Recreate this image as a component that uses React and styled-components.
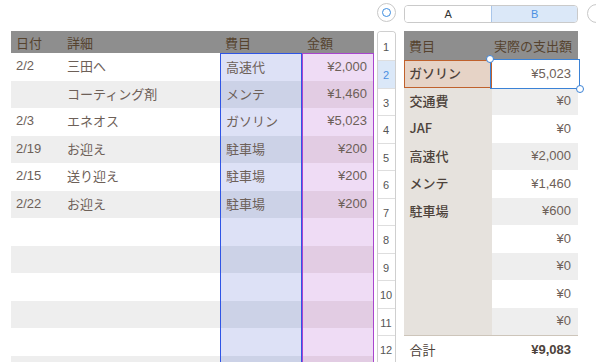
import React from "react";
import styled, { createGlobalStyle } from "styled-components";

const GlobalStyle = createGlobalStyle`
  html, body {
    margin: 0;
    padding: 0;
    background: #fff;
    overflow: hidden;
  }
  body {
    font-family: "Liberation Sans", "Noto Sans CJK JP", sans-serif;
    font-size: 13px;
    color: #6d6058;
  }
`;

const leftRows = [
  ["2/2", "三田へ", "高速代", "¥2,000"],
  ["", "コーティング剤", "メンテ", "¥1,460"],
  ["2/3", "エネオス", "ガソリン", "¥5,023"],
  ["2/19", "お迎え", "駐車場", "¥200"],
  ["2/15", "送り迎え", "駐車場", "¥200"],
  ["2/22", "お迎え", "駐車場", "¥200"],
  ["", "", "", ""],
  ["", "", "", ""],
  ["", "", "", ""],
  ["", "", "", ""],
  ["", "", "", ""],
  ["", "", "", ""],
];

const rightRows = [
  ["ガソリン", "¥5,023"],
  ["交通費", "¥0"],
  ["JAF", "¥0"],
  ["高速代", "¥2,000"],
  ["メンテ", "¥1,460"],
  ["駐車場", "¥600"],
  ["", "¥0"],
  ["", "¥0"],
  ["", "¥0"],
  ["", "¥0"],
];

const Page = styled.div`
  display: flex;
  align-items: flex-start;
  width: 596px;
  height: 362px;
  overflow: hidden;
`;

const LeftTable = styled.div`
  margin: 31px 0 0 11px;
  width: 363px;
  flex-shrink: 0;
  display: grid;
  grid-template-columns: 51px 158px 82px 72px;
`;

const HeadCell = styled.div`
  height: ${(p) => p.$h || 22}px;
  background: #8e8e8e;
  color: #56432f;
  display: flex;
  align-items: center;
  justify-content: ${(p) => (p.$right ? "flex-end" : "flex-start")};
  padding: 0 ${(p) => (p.$right ? 6 : 0)}px 0 ${(p) => (p.$right ? 0 : 5)}px;
  box-sizing: border-box;
  font-size: 13px;
`;

const toneBg = {
  plain: ["#ffffff", "#eeeeee"],
  blue: ["#dde1f6", "#ccd2e7"],
  pink: ["#efdcf5", "#e2cce3"],
};

const toneLine = {
  blue: "#2f55e6",
  pink: "#a845cf",
};

const Cell = styled.div`
  height: 27.5px;
  box-sizing: border-box;
  background: ${(p) => toneBg[p.$tone][p.$alt ? 1 : 0]};
  display: flex;
  align-items: center;
  justify-content: ${(p) => (p.$right ? "flex-end" : "flex-start")};
  padding: 0 ${(p) => (p.$right ? 6 : 0)}px 2px ${(p) => (p.$right ? 0 : 5)}px;
  white-space: nowrap;
  ${(p) =>
    p.$tone !== "plain" &&
    `border-left: 1px solid ${toneLine[p.$tone]};
     border-right: 1px solid ${toneLine[p.$tone]};`}
  ${(p) => p.$first && p.$tone !== "plain" && `border-top: 1px solid ${toneLine[p.$tone]};`}
`;

const NumColumn = styled.div`
  width: 20px;
  margin-left: 2px;
  flex-shrink: 0;
  display: flex;
  flex-direction: column;
  align-items: center;
`;

const CircleButton = styled.div`
  width: 19px;
  height: 19px;
  margin-top: 3px;
  border-radius: 50%;
  border: 1px solid #c8c8c8;
  box-sizing: border-box;
  background: #fff;
  display: flex;
  align-items: center;
  justify-content: center;
  flex-shrink: 0;
  &::after {
    content: "";
    width: 9px;
    height: 9px;
    border-radius: 50%;
    border: 1.5px solid #3d8de0;
    box-sizing: border-box;
  }
`;

const NumStrip = styled.div`
  margin-top: 9px;
  width: 17px;
  border: 1px solid #cfcfcf;
  border-bottom: none;
  border-radius: 4px 4px 0 0;
  background: #fff;
  overflow: hidden;
`;

const NumCell = styled.div`
  height: ${(p) => (p.$first ? 28 : 27.5)}px;
  box-sizing: border-box;
  border-top: ${(p) => (p.$first ? "none" : "1px solid #dedede")};
  background: ${(p) => (p.$active ? "#dbe8f8" : "#fff")};
  color: ${(p) => (p.$active ? "#4a90e2" : "#555")};
  font-size: 11px;
  display: flex;
  align-items: center;
  justify-content: center;
  padding-top: 2px;
`;

const RightArea = styled.div`
  margin-left: 8px;
  display: flex;
  flex-direction: column;
  flex-shrink: 0;
`;

const Toolbar = styled.div`
  display: flex;
  align-items: center;
  height: 31px;
  gap: 9px;
`;

const ColumnBar = styled.div`
  display: flex;
  width: 174px;
  height: 18px;
  margin-top: -4px;
  border: 1px solid #cacaca;
  border-radius: 4px;
  box-sizing: border-box;
  overflow: hidden;
`;

const ColumnTab = styled.div`
  width: ${(p) => p.$w}px;
  display: flex;
  align-items: center;
  justify-content: center;
  font-size: 11px;
  color: ${(p) => (p.$active ? "#4a90e2" : "#333")};
  background: ${(p) => (p.$active ? "#dbe8f8" : "#fff")};
  border-left: ${(p) => (p.$active ? "1px solid #a9c6ea" : "none")};
`;

const EdgeButton = styled.div`
  width: 19px;
  height: 19px;
  margin-top: -4px;
  border-radius: 50%;
  border: 1px solid #c8c8c8;
  box-sizing: border-box;
  flex-shrink: 0;
`;

const RightTable = styled.div`
  width: 174px;
  display: grid;
  grid-template-columns: 88px 86px;
`;

const KeyCell = styled.div`
  height: 27.5px;
  box-sizing: border-box;
  background: ${(p) => (p.$selected ? "#e6d3c6" : "#e6e2dd")};
  border: ${(p) => (p.$selected ? "1.5px solid #c0612c" : "none")};
  color: #4d423b;
  font-family: "Noto Sans CJK JP", "Liberation Sans", sans-serif;
  font-weight: 500;
  display: flex;
  align-items: center;
  padding: 0 0 2px ${(p) => (p.$selected ? 4 : 5.5)}px;
`;

const ValueCell = styled.div`
  height: 27.5px;
  box-sizing: border-box;
  background: ${(p) => (p.$alt ? "#eeeeee" : "#fff")};
  display: flex;
  align-items: center;
  justify-content: flex-end;
  padding: 0 7px 1px 0;
  position: relative;
`;

const Selection = styled.div`
  position: absolute;
  z-index: 2;
  left: -2px;
  top: -1px;
  right: -2px;
  bottom: -1px;
  border: 1.5px solid #3b82d6;
  pointer-events: none;
`;

const Handle = styled.span`
  position: absolute;
  width: 6px;
  height: 6px;
  border-radius: 50%;
  background: #fff;
  border: 1.5px solid #3b82d6;
  ${(p) => (p.$pos === "tl" ? "left: -5px; top: -5px;" : "right: -5px; bottom: -5px;")}
`;

const FootCell = styled.div`
  height: 27.5px;
  box-sizing: border-box;
  border-top: 1.5px solid #cdc5ba;
  display: flex;
  align-items: center;
  justify-content: ${(p) => (p.$right ? "flex-end" : "flex-start")};
  padding: 0 ${(p) => (p.$right ? 7 : 0)}px 0 ${(p) => (p.$right ? 0 : 5.5)}px;
  color: #4d423b;
  font-weight: ${(p) => (p.$bold ? "bold" : "normal")};
`;

const App = () => {
  const tones = ["plain", "plain", "blue", "pink"];
  return (
    <Page>
      <GlobalStyle />
      <LeftTable>
        <HeadCell>日付</HeadCell>
        <HeadCell>詳細</HeadCell>
        <HeadCell>費目</HeadCell>
        <HeadCell>金額</HeadCell>
        {leftRows.map((row, i) =>
          row.map((text, j) => (
            <Cell
              key={`${i}-${j}`}
              $tone={tones[j]}
              $alt={i % 2 === 1}
              $first={i === 0}
              $right={j === 3}
            >
              {text}
            </Cell>
          ))
        )}
      </LeftTable>

      <NumColumn>
        <CircleButton />
        <NumStrip>
          {Array.from({ length: 12 }, (_, i) => (
            <NumCell key={i} $first={i === 0} $active={i === 1}>
              {i + 1}
            </NumCell>
          ))}
        </NumStrip>
      </NumColumn>

      <RightArea>
        <Toolbar>
          <ColumnBar>
            <ColumnTab $w={88}>A</ColumnTab>
            <ColumnTab $w={86} $active>
              B
            </ColumnTab>
          </ColumnBar>
          <EdgeButton />
        </Toolbar>
        <RightTable>
          <HeadCell $h={29}>費目</HeadCell>
          <HeadCell $h={29} $right>
            実際の支出額
          </HeadCell>
          {rightRows.map(([label, value], i) => (
            <React.Fragment key={i}>
              <KeyCell $selected={i === 0}>{label}</KeyCell>
              <ValueCell $alt={i % 2 === 1}>
                {value}
                {i === 0 && (
                  <Selection>
                    <Handle $pos="tl" />
                    <Handle $pos="br" />
                  </Selection>
                )}
              </ValueCell>
            </React.Fragment>
          ))}
          <FootCell>合計</FootCell>
          <FootCell $right $bold>
            ¥9,083
          </FootCell>
        </RightTable>
      </RightArea>
    </Page>
  );
};

export default App;
